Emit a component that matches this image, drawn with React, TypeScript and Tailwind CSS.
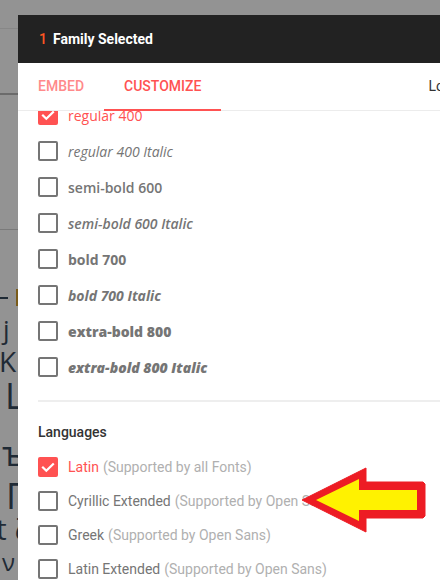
import React from "react";

const Box = ({ checked }: { checked?: boolean }) =>
  checked ? (
    <div className="w-5 h-5 shrink-0 rounded-[2px] bg-[#ff5252] flex items-center justify-center">
      <svg width="20" height="20" viewBox="0 0 20 20">
        <path d="M5 10.5l3.3 3.3L15 7.2" fill="none" stroke="#fff" strokeWidth="2.2" strokeLinecap="square" />
      </svg>
    </div>
  ) : (
    <div className="w-5 h-5 shrink-0 rounded-[2px] border-2 border-[#757575]" />
  );

const weights: { label: string; cls: string; checked?: boolean }[] = [
  { label: "regular 400", cls: "font-normal text-[#ff5252]", checked: true },
  { label: "regular 400 Italic", cls: "font-normal italic" },
  { label: "semi-bold 600", cls: "font-semibold" },
  { label: "semi-bold 600 Italic", cls: "font-semibold italic" },
  { label: "bold 700", cls: "font-bold" },
  { label: "bold 700 Italic", cls: "font-bold italic" },
  { label: "extra-bold 800", cls: "font-extrabold" },
  { label: "extra-bold 800 Italic", cls: "font-extrabold italic" },
];

const langs: { name: string; note: string; checked?: boolean }[] = [
  { name: "Latin", note: "(Supported by all Fonts)", checked: true },
  { name: "Cyrillic Extended", note: "(Supported by Open Sans)" },
  { name: "Greek", note: "(Supported by Open Sans)" },
  { name: "Latin Extended", note: "(Supported by Open Sans)" },
];

export default function App() {
  return (
    <div className="w-[440px] h-[580px] bg-[#939393] relative overflow-hidden flex">
      {/* background page strip */}
      <div className="w-[18px] shrink-0 flex flex-col overflow-hidden font-['Open_Sans',sans-serif] text-[#1f2a35]">
        <div className="h-[28px] shrink-0" />
        <div className="h-px shrink-0 bg-[#878787]" />
        <div className="h-[64px] shrink-0" />
        <div className="h-[2px] shrink-0 bg-[#6b6b6b]" />
        <div className="h-[134px] shrink-0" />
        <div className="h-px shrink-0 bg-[#7a7a7a]" />
        <div className="h-[59px] shrink-0" />
        <div className="h-[17px] shrink-0 flex items-center">
          <div className="w-[8px] h-[2px] bg-[#1f2a35]" />
          <div className="ml-[8px] w-[2px] h-full bg-[#7a5c1a]" />
        </div>
        <div className="mt-[10px] h-[30px] shrink-0 text-[26px] leading-none pl-[3px]">j</div>
        <div className="mt-px h-[28px] shrink-0 text-[28px] leading-none whitespace-nowrap -ml-[1px]">K<span className="ml-[3px] text-[14px]">:</span></div>
        <div className="mt-[3px] h-[36px] shrink-0 text-[36px] leading-none pl-[5px]">L</div>
        <div className="mt-[22px] h-[34px] shrink-0 text-[34px] leading-none pl-[2px]">ъ</div>
        <div className="mt-[8px] h-[36px] shrink-0 text-[36px] leading-none pl-[6px] whitespace-nowrap">Г</div>
        <div className="h-[36px] shrink-0 text-[30px] leading-none whitespace-nowrap -ml-[4px]">t ζ</div>
        <div className="h-[30px] shrink-0 text-[24px] leading-none whitespace-nowrap pl-[2px]">ν</div>
      </div>

      {/* panel */}
      <div className="flex-1 mt-[15px] bg-white flex flex-col overflow-hidden">
        <div className="h-[48px] shrink-0 bg-[#222222] flex items-center pl-[21px] font-['Roboto',sans-serif] text-[14px]">
          <span className="text-[#ff5722] font-medium">1</span>
          <span className="ml-[6px] text-white font-bold">Family Selected</span>
        </div>
        <div className="h-[48px] shrink-0 flex items-stretch border-b border-[#ececec] font-['Roboto',sans-serif] text-[14px] font-medium whitespace-nowrap">
          <div className="px-5 flex items-center text-[#ff8a8a]">EMBED</div>
          <div className="px-5 flex items-center text-[#ff5252] border-b-2 border-[#ff5252] -mb-px">CUSTOMIZE</div>
          <div className="ml-[207px] flex items-center text-[#333] font-normal">Load Time</div>
        </div>
        <div className="flex-1 overflow-hidden">
          <div className="-mt-[14px] flex flex-col">
            {weights.map((w) => (
              <div key={w.label} className="h-[36px] flex items-center pl-5">
                <Box checked={w.checked} />
                <span className={`ml-[10px] text-[14px] font-['Open_Sans',sans-serif] text-[#757575] whitespace-nowrap ${w.cls}`}>
                  {w.label}
                </span>
              </div>
            ))}
            <div className="mt-[15px] ml-5 h-[2px] bg-[#eeeeee]" />
            <div className="mt-[20px] pl-5 h-[20px] leading-[20px] text-[14px] font-medium text-[#333] font-['Roboto',sans-serif]">
              Languages
            </div>
            <div className="mt-[8px] flex flex-col">
              {langs.map((l) => (
                <div key={l.name} className="h-[34px] flex items-center pl-5 font-['Roboto',sans-serif] text-[14px] whitespace-nowrap">
                  <Box checked={l.checked} />
                  <span className={`ml-[10px] ${l.checked ? "text-[#ff5252]" : "text-[#757575]"}`}>{l.name}</span>
                  <span className="ml-[4px] text-[#b0b0b0]">{l.note}</span>
                </div>
              ))}
            </div>
          </div>
        </div>
      </div>

      {/* annotation arrow */}
      <svg className="absolute left-[296px] top-[462px]" width="134" height="76" viewBox="0 0 134 76">
        <polygon points="6,38 70,6 70,20 127,20 129,22 129,54 127,56 70,56 70,70" fill="#ed1c24" stroke="#ed1c24" strokeWidth="1" strokeLinejoin="round" />
        <polygon points="20,38 63,17 63,28 121,28 121,48 63,48 63,59" fill="#fff200" />
      </svg>
    </div>
  );
}
